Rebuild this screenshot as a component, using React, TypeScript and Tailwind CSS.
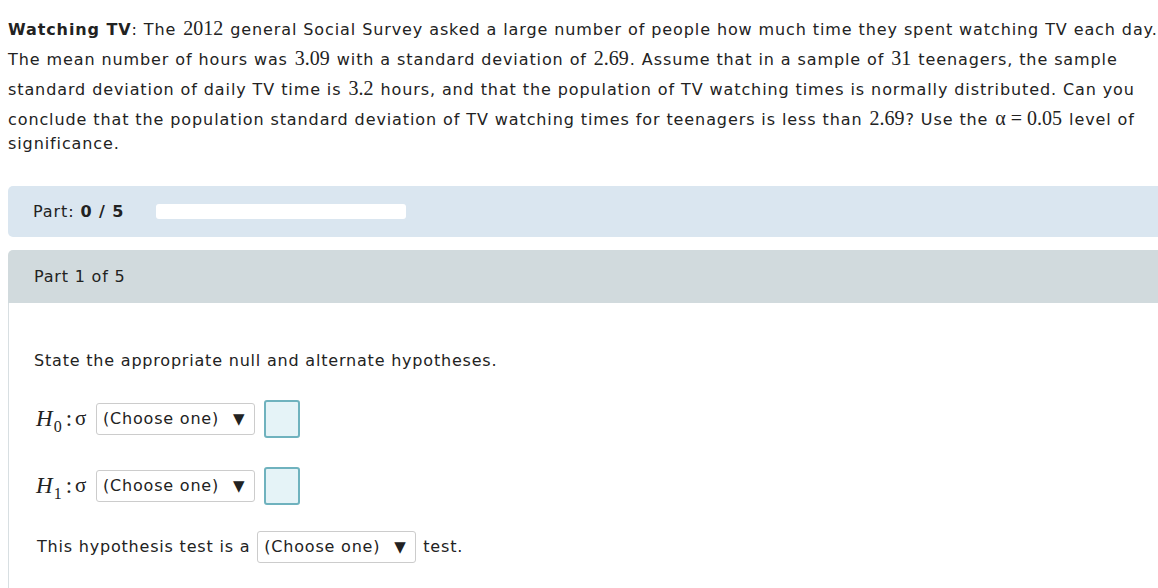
import React from "react";

const sans = { fontFamily: '"DejaVu Sans", Verdana, sans-serif' } as const;

function M({ children }: { children: React.ReactNode }) {
  return (
    <span className="mx-[1px] text-[20px] tracking-normal font-['Liberation_Serif',serif]">{children}</span>
  );
}

function Select({ className = "" }: { className?: string }) {
  return (
    <div
      className={`flex h-[32px] w-[159px] items-center rounded-[3px] border border-[#cccccc] bg-white pl-[6px] text-[16px] tracking-[0.8px] text-[#222] ${className}`}
    >
      <span>(Choose one)</span>
      <span className="ml-[14px] text-[15px] tracking-normal">▼</span>
    </div>
  );
}

function Box() {
  return (
    <div className="h-[38px] w-[36px] rounded-[3px] border-2 border-[#6fb2be] bg-[#e5f3f7]" />
  );
}

function Hyp({ sub }: { sub: string }) {
  return (
    <div className="flex items-center">
      <div className="flex w-[62px] items-center pl-[2px] font-['Liberation_Serif',serif] text-[23px] tracking-normal text-[#222]">
        <span className="italic">H</span>
        <span className="relative top-[8px] ml-[1px] text-[16px]">{sub}</span>
        <span className="ml-[4px]">:</span>
        <span className="ml-[3px] text-[21px]">σ</span>
      </div>
      <Select />
      <div className="ml-[9px]">
        <Box />
      </div>
    </div>
  );
}

export default function App() {
  return (
    <div className="h-[588px] w-[1158px] overflow-hidden bg-white tracking-[0.9px] text-[#222]" style={sans}>
      <div className="whitespace-nowrap pl-[8px] pt-[13px] text-[16px]">
        <div className="flex h-[30px] items-center">
          <span>
            <b>Watching TV</b>: The <M>2012</M> general Social Survey asked a large number of people how much time they spent watching TV each day.
          </span>
        </div>
        <div className="flex h-[30px] items-center">
          <span>
            The mean number of hours was <M>3.09</M> with a standard deviation of <M>2.69</M>. Assume that in a sample of <M>31</M> teenagers, the sample
          </span>
        </div>
        <div className="flex h-[30px] items-center">
          <span>
            standard deviation of daily TV time is <M>3.2</M> hours, and that the population of TV watching times is normally distributed. Can you
          </span>
        </div>
        <div className="flex h-[30px] items-center">
          <span>
            conclude that the population standard deviation of TV watching times for teenagers is less than <M>2.69</M>? Use the <M>α = 0.05</M> level of
          </span>
        </div>
        <div className="flex h-[22px] items-center">
          <span>significance.</span>
        </div>
      </div>

      <div className="ml-[8px] mt-[31px] flex h-[51px] items-center rounded-l-[5px] bg-[#dae6f0] pl-[25px] text-[16px]">
        <span>
          Part: <b>0 / 5</b>
        </span>
        <div className="ml-[32px] h-[15px] w-[250px] rounded-[3px] bg-white" />
      </div>

      <div className="ml-[8px] mt-[13px]">
        <div className="flex h-[53px] items-center rounded-tl-[5px] bg-[#d1dadd] pl-[26px] text-[16px] tracking-[0.8px]">
          Part 1 of 5
        </div>
        <div className="h-[300px] border-l border-[#d8dfe2] pl-[25px] pt-[47px] text-[16px]">
          <div className="flex h-[22px] items-center tracking-[0.8px]">State the appropriate null and alternate hypotheses.</div>
          <div className="mt-[28px]">
            <Hyp sub="0" />
          </div>
          <div className="mt-[29px]">
            <Hyp sub="1" />
          </div>
          <div className="mt-[26px] flex items-center pl-[3px] tracking-[0.8px]">
            <span>This hypothesis test is a</span>
            <Select className="ml-[7px]" />
            <span className="ml-[7px]">test.</span>
          </div>
        </div>
      </div>
    </div>
  );
}
